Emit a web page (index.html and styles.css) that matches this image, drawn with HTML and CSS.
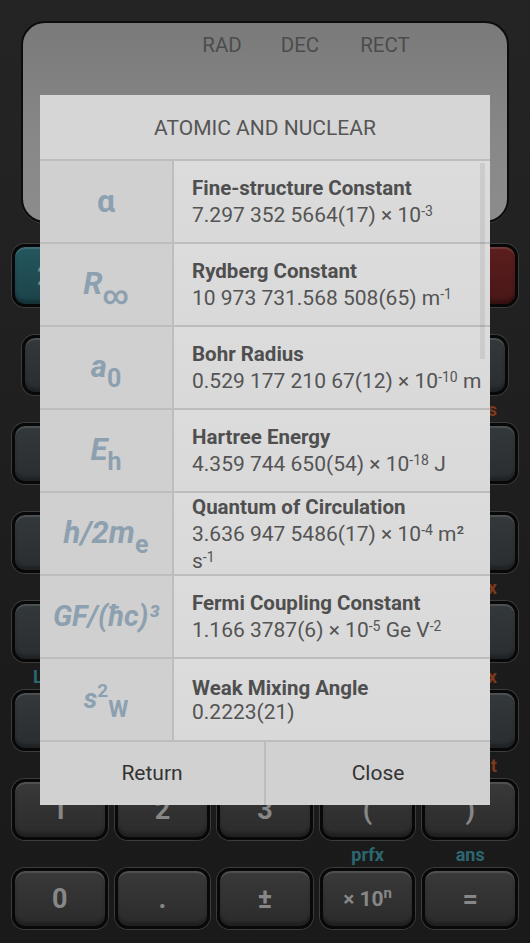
FILE: index.html
```html
<!DOCTYPE html>
<html>
<head>
<meta charset="utf-8">
<link rel="stylesheet" href="styles.css">
</head>
<body>
<div class="screen">
  <div class="calc">
    <div class="display">
      <div class="modes"><span>RAD</span><span>DEC</span><span>RECT</span></div>
    </div>

    <div class="keys row-a">
      <div class="key teal">2nd</div>
      <div class="key">x²</div>
      <div class="key">√</div>
      <div class="key">⌫</div>
      <div class="key red">AC</div>
    </div>
    <div class="labels lb-b"><div class="slot"></div><div class="slot"></div><div class="slot"></div><div class="slot"></div><div class="slot"></div></div>
    <div class="keys row-b">
      <div class="key small">cnst</div>
      <div class="key small">func</div>
      <div class="key small">hist</div>
      <div class="key small">◂▸</div>
      <div class="key small">copy</div>
    </div>
    <div class="labels"><div class="slot"></div><div class="slot"></div><div class="slot"></div><div class="slot"></div><div class="slot right"><span class="or">units</span></div></div>
    <div class="keys">
      <div class="key">MR</div>
      <div class="key small">cos</div>
      <div class="key small">tan</div>
      <div class="key">π</div>
      <div class="key">i</div>
    </div>
    <div class="labels"><div class="slot"></div><div class="slot"></div><div class="slot"></div><div class="slot"></div><div class="slot"></div></div>
    <div class="keys">
      <div class="key small">sin</div>
      <div class="key small">ln</div>
      <div class="key small">√</div>
      <div class="key small">xʸ</div>
      <div class="key small">log</div>
    </div>
    <div class="labels"><div class="slot"></div><div class="slot"></div><div class="slot"></div><div class="slot"></div><div class="slot right"><span class="or">mod x</span></div></div>
    <div class="keys">
      <div class="key">7</div>
      <div class="key">8</div>
      <div class="key">9</div>
      <div class="key">−</div>
      <div class="key">+</div>
    </div>
    <div class="labels"><div class="slot left"><span class="te">LCM</span></div><div class="slot"></div><div class="slot"></div><div class="slot"></div><div class="slot right"><span class="or">∫dx</span></div></div>
    <div class="keys">
      <div class="key">4</div>
      <div class="key">5</div>
      <div class="key">6</div>
      <div class="key">÷</div>
      <div class="key">×</div>
    </div>
    <div class="labels"><div class="slot"></div><div class="slot"></div><div class="slot"></div><div class="slot"></div><div class="slot right"><span class="or">int</span></div></div>
    <div class="keys num">
      <div class="key">1</div>
      <div class="key">2</div>
      <div class="key">3</div>
      <div class="key">(</div>
      <div class="key">)</div>
    </div>
    <div class="labels"><div class="slot"></div><div class="slot"></div><div class="slot"></div><div class="slot"><span class="te">prfx</span></div><div class="slot"><span class="te">ans</span></div></div>
    <div class="keys num">
      <div class="key">0</div>
      <div class="key">.</div>
      <div class="key">±</div>
      <div class="key exp"><span>× 10<sup>n</sup></span></div>
      <div class="key">=</div>
    </div>
  </div>

  <div class="dialog">
    <div class="title">ATOMIC AND NUCLEAR</div>
    <div class="list">
      <div class="row">
        <div class="sym"><span class="up">α</span></div>
        <div class="info"><div class="name">Fine-structure Constant</div><div class="val">7.297 352 5664(17) × 10<sup>-3</sup></div></div>
      </div>
      <div class="row">
        <div class="sym"><span>R<sub>∞</sub></span></div>
        <div class="info"><div class="name">Rydberg Constant</div><div class="val">10 973 731.568 508(65) m<sup>-1</sup></div></div>
      </div>
      <div class="row">
        <div class="sym"><span>a<sub>0</sub></span></div>
        <div class="info"><div class="name">Bohr Radius</div><div class="val">0.529 177 210 67(12) × 10<sup>-10</sup> m</div></div>
      </div>
      <div class="row">
        <div class="sym"><span>E<sub>h</sub></span></div>
        <div class="info"><div class="name">Hartree Energy</div><div class="val">4.359 744 650(54) × 10<sup>-18</sup> J</div></div>
      </div>
      <div class="row">
        <div class="sym"><span>h/2m<sub>e</sub></span></div>
        <div class="info"><div class="name">Quantum of Circulation</div><div class="val">3.636 947 5486(17) × 10<sup>-4</sup> m² s<sup>-1</sup></div></div>
      </div>
      <div class="row">
        <div class="sym gf"><span>GF/(ħc)³</span></div>
        <div class="info"><div class="name">Fermi Coupling Constant</div><div class="val">1.166 3787(6) × 10<sup>-5</sup> Ge V<sup>-2</sup></div></div>
      </div>
      <div class="row">
        <div class="sym small"><span>s<sup>2</sup><sub>W</sub></span></div>
        <div class="info"><div class="name">Weak Mixing Angle</div><div class="val">0.2223(21)</div></div>
      </div>
    </div>
    <div class="buttons"><div class="btn">Return</div><div class="btn">Close</div></div>
    <div class="scrollbar"></div>
  </div>
</div>
</body>
</html>
```

FILE: styles.css
```css
* { box-sizing: border-box; }
html, body { margin: 0; padding: 0; }
body {
  width: 530px;
  height: 943px;
  overflow: hidden;
  background: #1b1b1b;
  font-family: Roboto, "Liberation Sans", sans-serif;
}
.screen {
  position: relative;
  width: 530px;
  height: 943px;
  background: linear-gradient(#242424 0, #222 230px, #1b1b1b 700px, #1a1a1a);
}
.calc {
  display: flex;
  flex-direction: column;
  padding-top: 21px;
}
.display {
  margin: 0 21px;
  height: 202px;
  border: 2px solid #0c0c0c;
  border-radius: 24px;
  background: linear-gradient(#7a7a7a, #888 60%, #8c8c8c);
  box-shadow: 0 1px 0 #3a3a3a;
}
.modes {
  display: flex;
  padding-top: 10px;
  padding-left: 160px;
  font-size: 20.5px;
  color: #4c4c4c;
}
.modes span { display: block; width: 78px; text-align: center; line-height: 24px; }
.modes span:nth-child(3) { width: 92px; }

.keys {
  display: flex;
  gap: 7px;
  padding: 0 12px;
  height: 61px;
}
.row-a { margin-top: 21px; height: 63px; }
.row-b { padding: 0 22px; height: 60px; }
.labels {
  display: flex;
  gap: 7px;
  padding: 0 12px;
  height: 28px;
  align-items: center;
  font-weight: bold;
  font-size: 18px;
}
.slot {
  flex: 1;
  display: flex;
  justify-content: center;
  padding: 0 21px;
}
.slot.right { justify-content: flex-end; }
.slot.left { justify-content: flex-start; }
.or { color: #7e3a1c; }
.te { color: #2c6770; }

.key {
  flex: 1;
  border-radius: 13px;
  border: 3px solid #080808;
  box-shadow: 0 0 0 1px #3c3c3c, inset 0 2px 1px rgba(255,255,255,0.13), inset 0 -4px 3px rgba(0,0,0,0.25);
  background: linear-gradient(#33383b, #292d30);
  display: flex;
  align-items: center;
  justify-content: center;
  color: #878787;
  font-weight: bold;
  font-size: 27px;
}
.num .key { background: linear-gradient(#393939, #2b2b2b); }
.key.small { font-size: 20px; }
.key.teal { background: linear-gradient(#24575e, #1b4248); color: #6a8c90; }
.key.red { background: linear-gradient(#5c1e1e, #481616); color: #8a5a5a; }
.key.exp { font-size: 21px; }
.key.exp sup { font-size: 15px; vertical-align: 8px; line-height: 0; }

/* dialog */
.dialog {
  position: absolute;
  left: 40px;
  top: 95px;
  width: 450px;
  height: 710px;
  background: #d3d3d3;
  display: flex;
  flex-direction: column;
}
.title {
  height: 64px;
  display: flex;
  align-items: center;
  justify-content: center;
  font-size: 21px;
  color: #555;
  background: #d6d6d6;
  padding-top: 1px;
}
.list { display: flex; flex-direction: column; }
.row {
  height: 83px;
  display: flex;
  border-top: 2px solid #bdbdbd;
}
.sym {
  width: 134px;
  flex: none;
  border-right: 2px solid #bdbdbd;
  background: #d0d0d0;
  display: flex;
  align-items: center;
  justify-content: center;
  color: #8ca0b0;
  font-weight: bold;
  font-style: italic;
  font-size: 31px;
  line-height: 34px;
  padding-bottom: 2px;
}
.sym.gf { font-size: 29px; }
.sym .up { font-style: normal; font-size: 32px; }
.sym sub {
  font-style: normal;
  font-size: 25px;
  vertical-align: -10px;
  line-height: 0;
}
.sym.small { font-size: 27px; }
.sym.small sup { font-style: normal; font-size: 19px; vertical-align: 11px; line-height: 0; }
.sym.small sub { font-size: 23px; vertical-align: -9px; }

.info {
  flex: 1;
  background: linear-gradient(#dcdcdc, #d9d9d9);
  display: flex;
  flex-direction: column;
  justify-content: center;
  padding-left: 18px;
  color: #545454;
  overflow: hidden;
}
.name {
  font-weight: bold;
  font-size: 20.5px;
  line-height: 24px;
  color: #4f4f4f;
}
.val {
  font-size: 21px;
  line-height: 24px;
  padding-right: 8px;
}
.val sup {
  font-size: 14px;
  line-height: 22px;
  vertical-align: 6px;
}
.buttons {
  flex: 1;
  display: flex;
  border-top: 2px solid #bdbdbd;
  background: #d1d1d1;
}
.btn {
  flex: 1;
  display: flex;
  align-items: center;
  justify-content: center;
  font-size: 21px;
  color: #333;
  padding-bottom: 2px;
}
.btn + .btn { border-left: 2px solid #bdbdbd; }
.scrollbar {
  position: absolute;
  left: 440px;
  top: 68px;
  width: 5px;
  height: 196px;
  background: rgba(0,0,0,0.07);
}
```
